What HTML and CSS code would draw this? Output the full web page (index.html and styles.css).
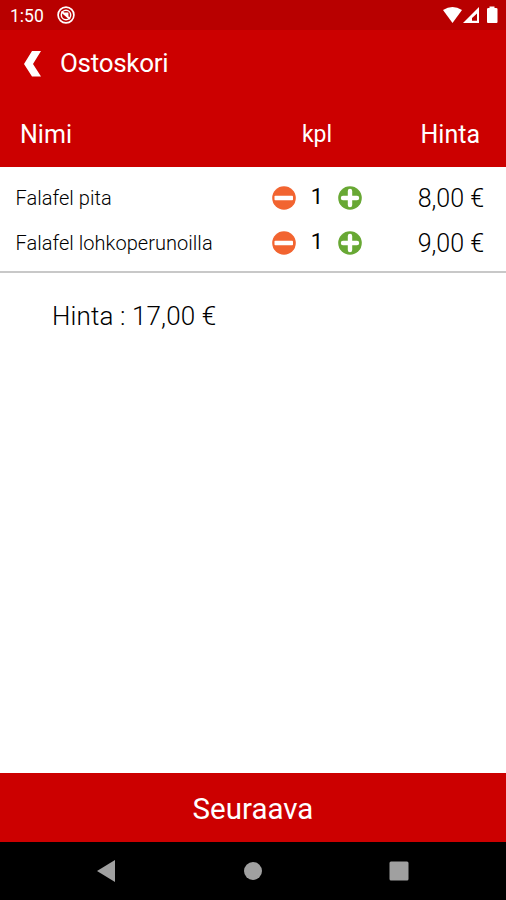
FILE: index.html
```html
<!DOCTYPE html>
<html lang="fi">
<head>
    <meta charset="UTF-8">
    <title>Ostoskori</title>
    <link rel="stylesheet" href="styles.css">
</head>
<body>
    <div class="status-bar">
        <span class="clock">1:50</span>
        <svg class="app-icon" width="18" height="18" viewBox="0 0 18 18" fill="none" stroke="#fff">
            <circle cx="9" cy="9" r="7.9" stroke-width="1.7"/>
            <circle cx="9" cy="9" r="4.7" stroke-width="1.5"/>
            <path d="M4.5 5.5L13 13M7 7.5h3.5v3" stroke-width="1.9"/>
        </svg>
        <svg class="system-icons" width="55" height="18" viewBox="0 0 55 18" fill="#fff">
            <path d="M0 4Q9.5-2 19 4L9.5 17Z"/>
            <path fill-rule="evenodd" d="M20 17L36 1V17ZM29 14.8H34V7.5L29 12Z"/>
            <path d="M44 3Q44 2 45.5 2H46.5V.5H51.5V2H53Q54.5 2 54.5 3V16Q54.5 17 53.5 17H45Q44 17 44 16Z"/>
        </svg>
    </div>

    <header class="title-bar">
        <svg class="back" width="18" height="26" viewBox="0 0 18 26">
            <path d="M8 0H17L9 13L17 25.5H8L0 13Z" fill="#fff"/>
        </svg>
        <h1>Ostoskori</h1>
    </header>

    <div class="cart-row cart-head">
        <span class="name">Nimi</span>
        <span class="count">kpl</span>
        <span class="price">Hinta</span>
    </div>

    <main>
        <div class="cart-items">
            <div class="cart-row">
                <span class="name">Falafel pita</span>
                <div class="count">
                    <svg width="24" height="24" viewBox="0 0 24 24">
                        <circle cx="12" cy="12" r="11.8" fill="#f26430"/>
                        <rect x="2.5" y="9.8" width="18.5" height="4.4" rx=".8" fill="#fff"/>
                    </svg>
                    <span class="amount">1</span>
                    <svg width="24" height="24" viewBox="0 0 24 24">
                        <circle cx="12" cy="12" r="11.8" fill="#68a834"/>
                        <path d="M12 5V19M5 12H19" stroke="#fff" stroke-width="4.4" stroke-linecap="round"/>
                    </svg>
                </div>
                <span class="price">8,00 €</span>
            </div>
            <div class="cart-row">
                <span class="name">Falafel lohkoperunoilla</span>
                <div class="count">
                    <svg width="24" height="24" viewBox="0 0 24 24">
                        <circle cx="12" cy="12" r="11.8" fill="#f26430"/>
                        <rect x="2.5" y="9.8" width="18.5" height="4.4" rx=".8" fill="#fff"/>
                    </svg>
                    <span class="amount">1</span>
                    <svg width="24" height="24" viewBox="0 0 24 24">
                        <circle cx="12" cy="12" r="11.8" fill="#68a834"/>
                        <path d="M12 5V19M5 12H19" stroke="#fff" stroke-width="4.4" stroke-linecap="round"/>
                    </svg>
                </div>
                <span class="price">9,00 €</span>
            </div>
        </div>
        <p class="total">Hinta : 17,00 €</p>
    </main>

    <button class="next">Seuraava</button>

    <nav class="nav-bar">
        <svg width="18" height="22" viewBox="0 0 18 22"><path d="M0 11L18 0V22Z" fill="#a0a0a0"/></svg>
        <svg width="20" height="20" viewBox="0 0 20 20"><circle cx="11" cy="10" r="9" fill="#a0a0a0"/></svg>
        <svg width="20" height="20" viewBox="0 0 20 20"><rect x=".5" y=".5" width="19" height="19" rx="1.5" fill="#a0a0a0"/></svg>
    </nav>
</body>
</html>
```
FILE: styles.css
```css
body {
    display: flex;
    flex-direction: column;
    height: 900px;
    margin: 0;
    font-family: Roboto, sans-serif;
    background-color: #fff;
    color: #000;
}

svg {
    display: block;
    flex: none;
}

.status-bar {
    display: flex;
    align-items: center;
    box-sizing: border-box;
    height: 30px;
    padding: 0 8px 0 10px;
    background-color: #b80000;
    color: #fff;
}

.clock {
    width: 47px;
    font-size: 17.5px;
    line-height: 30px;
    padding-top: 2px;
}

.system-icons {
    margin-left: auto;
}

.title-bar {
    display: flex;
    align-items: center;
    height: 67px;
    padding-left: 24px;
    background-color: #cc0000;
    color: #fff;
}

.title-bar h1 {
    margin: 0 0 1px 18px;
    font-size: 26px;
    font-weight: 400;
    letter-spacing: -0.3px;
}

.cart-row {
    display: grid;
    grid-template-columns: 272px 90px 1fr;
    align-items: center;
    height: 45.5px;
    padding: 0 22px 0 0;
}

.cart-head {
    height: 65px;
    padding-top: 5px;
    background-color: #cc0000;
    color: #fff;
}

.name {
    padding-left: 15.5px;
    font-size: 20px;
    font-weight: 300;
    letter-spacing: 0.04px;
}

.cart-head .name {
    padding-left: 20px;
    font-size: 25px;
    font-weight: 400;
}

.count {
    display: flex;
    align-items: center;
    justify-content: space-between;
}

.cart-head .count {
    justify-content: center;
    font-size: 23px;
}

.amount {
    font-size: 22px;
    margin-bottom: 3px;
}

.price {
    padding-top: 1px;
    text-align: right;
    font-size: 25px;
    font-weight: 300;
}

.cart-head .price {
    padding: 0 4px 0 0;
    font-weight: 400;
}

main {
    flex: 1;
}

.cart-items {
    height: 96px;
    padding-top: 8px;
    border-bottom: 2px solid #c8c8c8;
    overflow: hidden;
}

.total {
    margin: 28px 0 0 52px;
    font-size: 26px;
    font-weight: 300;
    letter-spacing: 0.12px;
}

.next {
    height: 69px;
    padding-top: 3px;
    border: none;
    background-color: #cc0000;
    color: #fff;
    font-family: inherit;
    font-size: 29.5px;
}

.nav-bar {
    display: flex;
    align-items: center;
    justify-content: space-between;
    height: 58px;
    padding: 0 97px;
    background-color: #000;
}
```
